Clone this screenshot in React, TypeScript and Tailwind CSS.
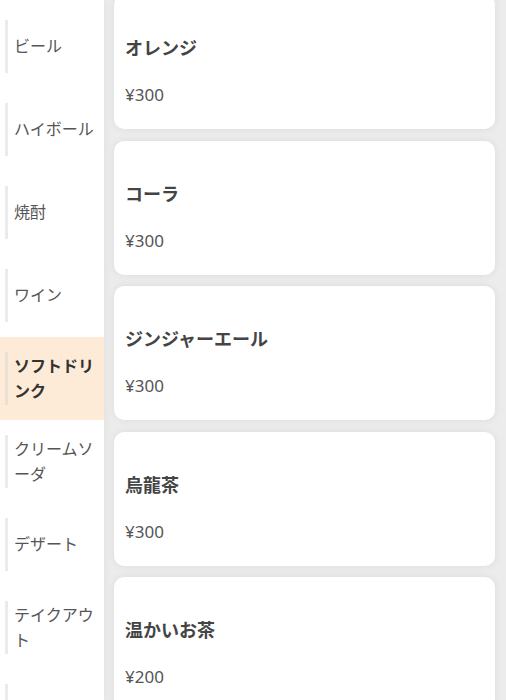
import React from 'react'

const categories = [
    'ビール',
    'ハイボール',
    '焼酎',
    'ワイン',
    'ソフトドリンク',
    'クリームソーダ',
    'デザート',
    'テイクアウト',
]

const items = [
    { name: 'オレンジ', price: 300 },
    { name: 'コーラ', price: 300 },
    { name: 'ジンジャーエール', price: 300 },
    { name: '烏龍茶', price: 300 },
    { name: '温かいお茶', price: 200 },
]

export default function App() {
    const active = 'ソフトドリンク'

    return (
        <div
            className="flex h-[700px] w-full overflow-hidden bg-[#ececec]"
            style={{ fontFamily: '"Noto Sans", "Noto Sans CJK JP", sans-serif' }}
        >
            {/* category menu */}
            <div className="z-10 w-[104px] shrink-0 bg-white pt-[5px] shadow-[2px_0_6px_rgba(0,0,0,0.04)]">
                {categories.map((cat) => (
                    <div
                        key={cat}
                        className={`py-[15px] ${cat === active ? 'bg-[#fdebd8]' : ''}`}
                    >
                        <div
                            className={`ml-[5px] flex h-[53px] items-center border-l-[3px] pl-[6px] pr-[6px] ${
                                cat === active
                                    ? 'border-[#ebe0d6]'
                                    : 'border-[#ebebeb]'
                            }`}
                        >
                            <span
                                className={`text-[16px] leading-[25px] ${
                                    cat === active
                                        ? 'font-bold text-[#333]'
                                        : 'text-[#555]'
                                }`}
                            >
                                {cat}
                            </span>
                        </div>
                    </div>
                ))}
                {/* next item, scrolled below the fold */}
                <div className="py-[15px]">
                    <div className="ml-[5px] h-[53px] border-l-[3px] border-[#ebebeb]" />
                </div>
            </div>

            {/* product list */}
            <div className="flex flex-1 flex-col gap-[11.5px] pl-[10px] pr-[11px] mt-[-5px]">
                {items.map((itm) => (
                    <div
                        key={itm.name}
                        className="h-[134px] shrink-0 rounded-[10px] bg-white px-[11px] pt-[40px] shadow-[0_0_8px_rgba(0,0,0,0.07)]"
                    >
                        <div className="text-[18px] font-bold leading-[27px] text-[#444]">
                            {itm.name}
                        </div>
                        <div className="mt-[21px] text-[17px] leading-[24px] text-[#555]">
                            ¥{itm.price}
                        </div>
                    </div>
                ))}
            </div>
        </div>
    )
}
